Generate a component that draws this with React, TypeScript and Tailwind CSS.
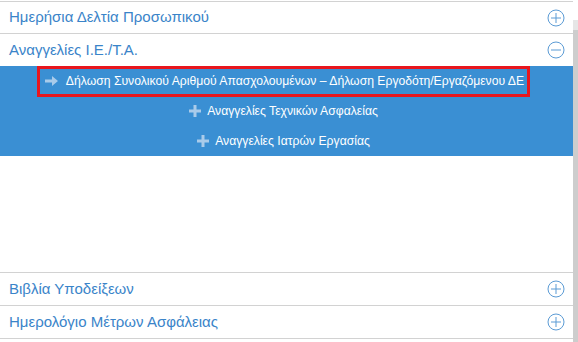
const font = { fontFamily: '"Liberation Sans", Arial, sans-serif' };

function CircleIcon({ minus }: { minus?: boolean }) {
  return (
    <svg width="18" height="18" viewBox="0 0 18 18" fill="none" stroke="#5b9bd5" strokeWidth="1">
      <circle cx="9" cy="9" r="8" />
      <path d="M4 9h10" />
      {!minus && <path d="M9 4v10" />}
    </svg>
  );
}

function Row({ label, tall }: { label: string; tall?: boolean }) {
  return (
    <div
      className={`flex items-center justify-between border-b border-[#d2d2d2] pl-[9px] pr-[8px] ${
        tall ? "h-[33px]" : "h-8"
      }`}
    >
      <span className="text-[15px] text-[#3a84c9]">{label}</span>
      <CircleIcon />
    </div>
  );
}

function PlusIcon() {
  return (
    <svg width="12" height="12" viewBox="0 0 12 12" fill="#a9cbea">
      <path d="M4.5 0h3v4.5H12v3H7.5V12h-3V7.5H0v-3h4.5z" />
    </svg>
  );
}

function ArrowIcon() {
  return (
    <svg width="13" height="12" viewBox="0 0 13 12" fill="#a9cbea">
      <path d="M0 4.5h7V1l6 5-6 5V7.5H0z" />
    </svg>
  );
}

export default function App() {
  return (
    <div className="flex h-[342px] w-[578px] overflow-hidden bg-white" style={font}>
      <div className="flex w-[573px] flex-col pt-px">
        <div className="border-t border-[#d2d2d2]" />
        <Row label="Ημερήσια Δελτία Προσωπικού" />
        <div className="flex h-8 items-center justify-between pl-[9px] pr-[8px]">
          <span className="text-[15px] text-[#3a84c9]">Αναγγελίες Ι.Ε./Τ.Α.</span>
          <CircleIcon minus />
        </div>
        <div className="flex flex-col bg-[#3a8fd3] text-[12.2px] text-white">
          <div className="flex h-[30px] items-center justify-center pr-[6px]">
            <div className="flex h-[31px] items-center gap-[8px] border-[3px] border-[#e8161e] pl-[5px] pr-[3px]">
              <ArrowIcon />
              <span>Δήλωση Συνολικού Αριθμού Απασχολουμένων – Δήλωση Εργοδότη/Εργαζόμενου ΔΕ</span>
            </div>
          </div>
          <div className="flex h-[30px] items-center justify-center gap-[6px] pr-[6px]">
            <PlusIcon />
            <span>Αναγγελίες Τεχνικών Ασφαλείας</span>
          </div>
          <div className="flex h-[30px] items-center justify-center gap-[6px] pr-[6px]">
            <PlusIcon />
            <span>Αναγγελίες Ιατρών Εργασίας</span>
          </div>
        </div>
        <div className="h-[117px] border-b border-[#d2d2d2]" />
        <Row label="Βιβλία Υποδείξεων" tall />
        <Row label="Ημερολόγιο Μέτρων Ασφάλειας" tall />
      </div>
      <div className="flex w-[5px] flex-col">
        <div className="h-[20px] bg-white" />
        <div className="h-[10px] bg-[#e6e6e6]" />
        <div className="flex-1 bg-[#cdcdcd]" />
      </div>
    </div>
  );
}
